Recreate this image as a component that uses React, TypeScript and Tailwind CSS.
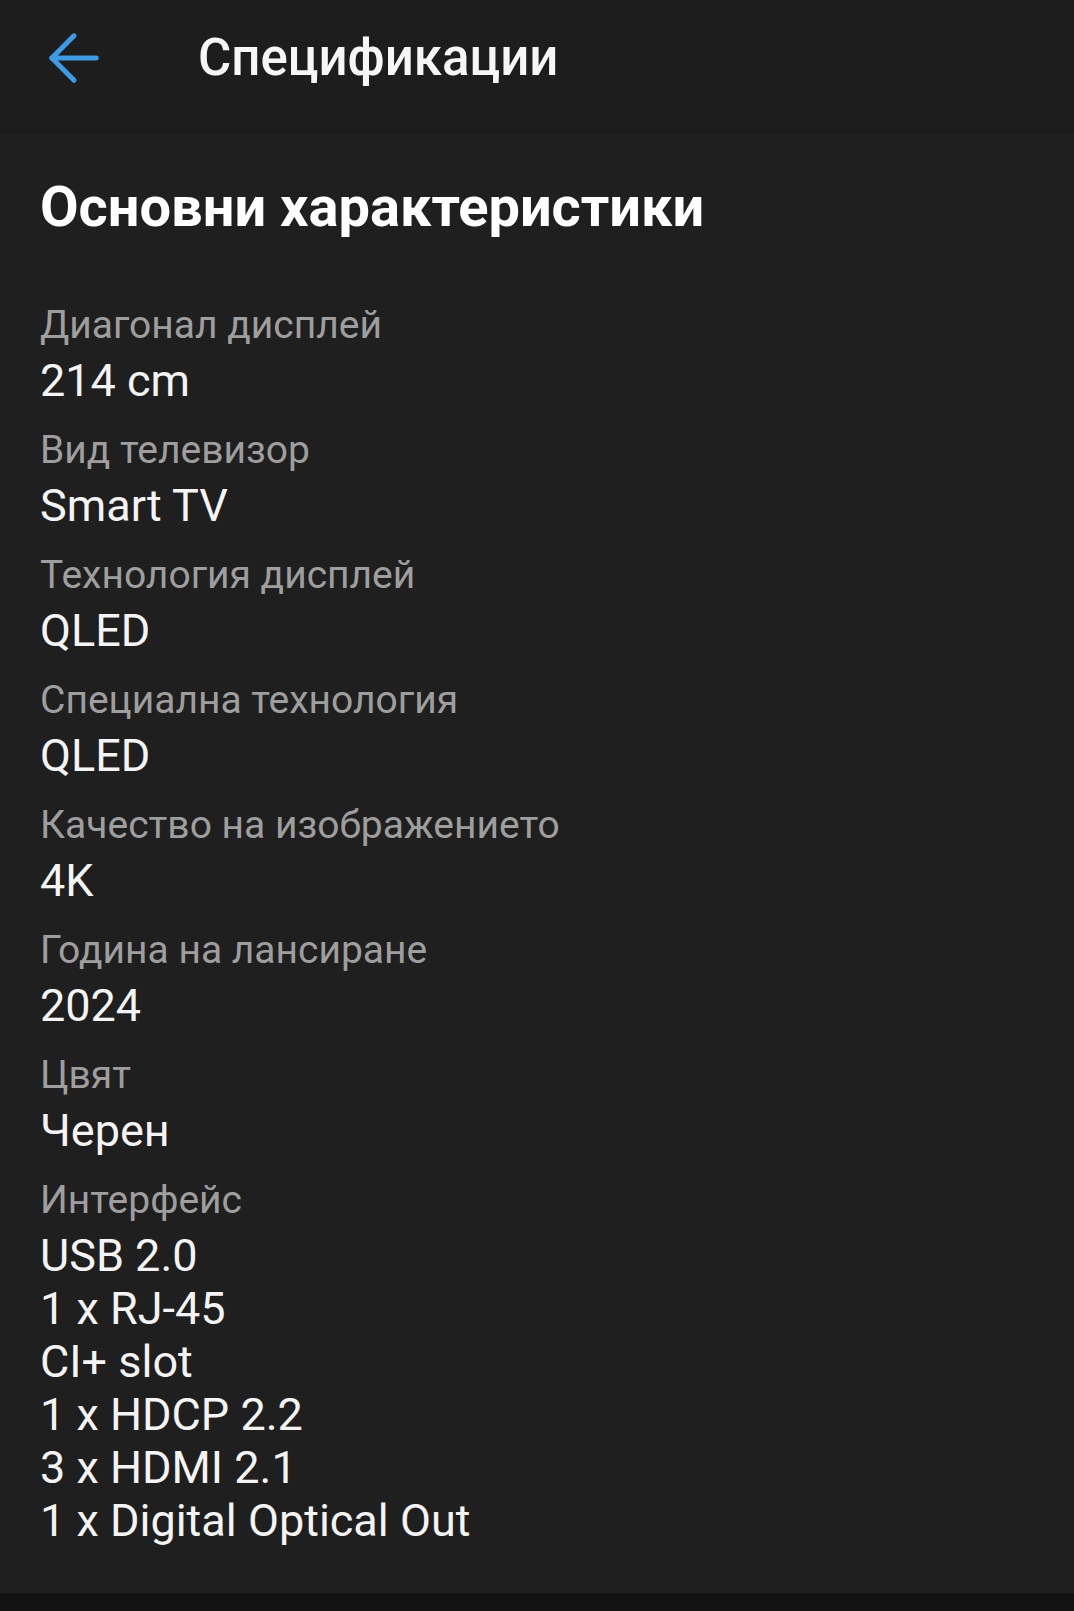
import { ArrowLeft } from "lucide-react";

const specs: { label: string; values: string[] }[] = [
  { label: "Диагонал дисплей", values: ["214 cm"] },
  { label: "Вид телевизор", values: ["Smart TV"] },
  { label: "Технология дисплей", values: ["QLED"] },
  { label: "Специална технология", values: ["QLED"] },
  { label: "Качество на изображението", values: ["4K"] },
  { label: "Година на лансиране", values: ["2024"] },
  { label: "Цвят", values: ["Черен"] },
  {
    label: "Интерфейс",
    values: ["USB 2.0", "1 x RJ-45", "CI+ slot", "1 x HDCP 2.2", "3 x HDMI 2.1", "1 x Digital Optical Out"],
  },
];

function SpecRow({ label, values }: { label: string; values: string[] }) {
  return (
    <div className="flex flex-col">
      <div className="text-[39px] leading-[46px] text-[#9e9e9e] mb-[6px]">{label}</div>
      {values.map((v) => (
        <div key={v} className="text-[45px] leading-[53px] text-[#f4f4f4]">
          {v}
        </div>
      ))}
    </div>
  );
}

export default function App() {
  return (
    <div className="min-h-[1611px] flex flex-col bg-[#1f1f1f]" style={{ fontFamily: "Roboto, 'Noto Sans', sans-serif" }}>
      <header className="h-[132px] flex items-center pb-[16px] bg-[#1d1d1d] border-b border-[#1a1a1a]">
        <button className="ml-[36px] w-[76px] h-[76px] flex items-center justify-center text-[#3d9be6]">
          <ArrowLeft size={76} strokeWidth={1.6} />
        </button>
        <h1 className="ml-[86px] text-[51px] font-medium text-[#f6f6f6] leading-none">Спецификации</h1>
      </header>

      <main className="flex-1 px-[40px] pt-[43px] pb-[40px]">
        <h2 className="text-[56px] font-bold text-white leading-[65px] mb-[62px]">Основни характеристики</h2>
        <div className="flex flex-col gap-[20px]">
          {specs.map((s) => (
            <SpecRow key={s.label} label={s.label} values={s.values} />
          ))}
        </div>
      </main>

      <div className="h-[18px] bg-[#121212]" />
    </div>
  );
}
